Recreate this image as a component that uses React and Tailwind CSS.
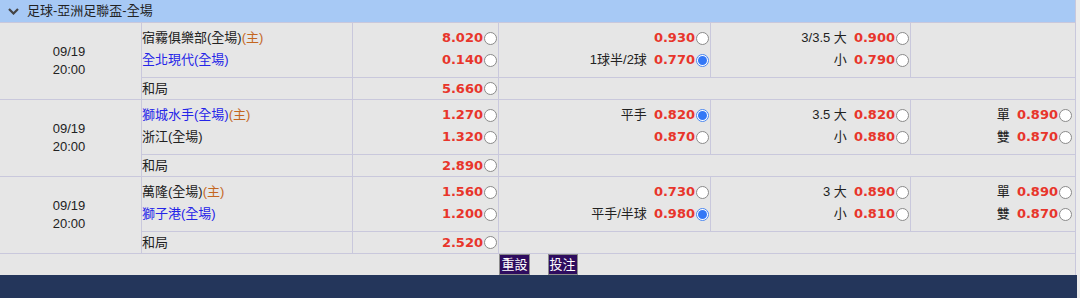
import React from 'react';

const FONT = "font-['Liberation_Sans','Noto_Sans_CJK_TC',sans-serif]";
const ODDS = "font-['DejaVu_Sans','Noto_Sans_CJK_TC',sans-serif] font-bold text-[13px] text-[#e8352b]";

const matches = [
  {
    date: '09/19', time: '20:00',
    teams: [
      { name: '宿霧俱樂部(全場)', blue: false, home: true },
      { name: '全北現代(全場)', blue: true },
    ],
    x12: ['8.020', '0.140', '5.660'],
    hdp: [{ label: '', odds: '0.930' }, { label: '1球半/2球', odds: '0.770', checked: true }],
    ou: [{ label: '3/3.5 大', odds: '0.900' }, { label: '小', odds: '0.790' }],
    oe: null,
  },
  {
    date: '09/19', time: '20:00',
    teams: [
      { name: '獅城水手(全場)', blue: true, home: true },
      { name: '浙江(全場)', blue: false },
    ],
    x12: ['1.270', '1.320', '2.890'],
    hdp: [{ label: '平手', odds: '0.820', checked: true }, { label: '', odds: '0.870' }],
    ou: [{ label: '3.5 大', odds: '0.820' }, { label: '小', odds: '0.880' }],
    oe: [{ label: '單', odds: '0.890' }, { label: '雙', odds: '0.870' }],
  },
  {
    date: '09/19', time: '20:00',
    teams: [
      { name: '萬隆(全場)', blue: false, home: true },
      { name: '獅子港(全場)', blue: true },
    ],
    x12: ['1.560', '1.200', '2.520'],
    hdp: [{ label: '', odds: '0.730' }, { label: '平手/半球', odds: '0.980', checked: true }],
    ou: [{ label: '3 大', odds: '0.890' }, { label: '小', odds: '0.810' }],
    oe: [{ label: '單', odds: '0.890' }, { label: '雙', odds: '0.870' }],
  },
];

const Radio = ({ checked }) => (
  checked ? (
    <span className="ml-px w-[13px] h-[13px] rounded-full bg-white border border-[#4a86f0] flex items-center justify-center shrink-0">
      <span className="w-[9px] h-[9px] rounded-full bg-[#3478f6]" />
    </span>
  ) : (
    <span className="ml-px w-[13px] h-[13px] rounded-full bg-white border border-[#8a8a8a] shrink-0" />
  )
);

const OddsLine = ({ label, odds, checked }) => (
  <div className="h-[22px] flex items-center justify-end pr-px">
    {label && <span className="text-[13px] text-[#222] mr-[7px]">{label}</span>}
    <span className={ODDS}>{odds}</span>
    <Radio checked={checked} />
  </div>
);

const Match = ({ m }) => (
  <div className="flex border-b border-[#c9c8dc]">
    <div className="w-[142px] shrink-0 border-r border-[#c9c8dc] flex flex-col items-center justify-center pr-[3px] text-[13px] leading-[18px] text-[#222]">
      <span>{m.date}</span>
      <span>{m.time}</span>
    </div>
    <div className="flex-1 flex flex-col">
      <div className="h-[55px] flex border-b border-[#c9c8dc]">
        <div className="w-[211px] shrink-0 border-r border-[#c9c8dc] pt-[4px]">
          {m.teams.map((t, i) => (
            <div key={i} className="h-[22px] flex items-center text-[13px]">
              <span className={t.blue ? 'text-[#2424e8]' : 'text-[#222]'}>{t.name}</span>
              {t.home && <span className="text-[#c4661f]">(主)</span>}
            </div>
          ))}
        </div>
        <div className="w-[146px] shrink-0 border-r border-[#c9c8dc] pt-[4px]">
          <OddsLine odds={m.x12[0]} />
          <OddsLine odds={m.x12[1]} />
        </div>
        <div className="w-[212px] shrink-0 border-r border-[#c9c8dc] pt-[4px]">
          {m.hdp.map((o, i) => <OddsLine key={i} {...o} />)}
        </div>
        <div className="w-[200px] shrink-0 border-r border-[#c9c8dc] pt-[4px]">
          {m.ou.map((o, i) => <OddsLine key={i} {...o} />)}
        </div>
        <div className="flex-1 pt-[4px] pr-[2px]">
          {m.oe && m.oe.map((o, i) => <OddsLine key={i} {...o} />)}
        </div>
      </div>
      <div className="h-[21px] flex">
        <div className="w-[211px] shrink-0 border-r border-[#c9c8dc] flex items-center text-[13px] text-[#222]">和局</div>
        <div className="w-[146px] shrink-0 border-r border-[#c9c8dc] flex items-center justify-end">
          <div className="flex items-center pr-px">
            <span className={ODDS}>{m.x12[2]}</span>
            <Radio />
          </div>
        </div>
        <div className="flex-1" />
      </div>
    </div>
  </div>
);

export default function App() {
  return (
    <div className={`w-[1080px] h-[298px] bg-[#ececec] overflow-hidden ${FONT}`}>
      <div className="w-[1076px] bg-[#e6e6e6] border-r border-[#c9c8dc]">
        <div className="h-[23px] bg-[#a7c9f5] flex items-center border-b border-[#c9c8dc]">
          <svg className="ml-[8px] mr-[8px]" width="11" height="7" viewBox="0 0 11 7">
            <path d="M1 1 L5.5 5.5 L10 1" fill="none" stroke="#444" strokeWidth="2.2" />
          </svg>
          <span className="text-[13px] text-[#222]">足球-亞洲足聯盃-全場</span>
        </div>
        {matches.map((m, i) => <Match key={i} m={m} />)}
        <div className="h-[21px] flex items-center justify-center gap-[18px] pl-[2px]">
          <button className="h-[21px] px-px bg-[#2e0c5e] border border-[#8c8c8c] text-white text-[13px] leading-none">重設</button>
          <button className="h-[21px] px-px bg-[#2e0c5e] border border-[#8c8c8c] text-white text-[13px] leading-none">投注</button>
        </div>
      </div>
      <div className="w-[1077px] h-[24px] bg-[#24365b]" />
    </div>
  );
}
